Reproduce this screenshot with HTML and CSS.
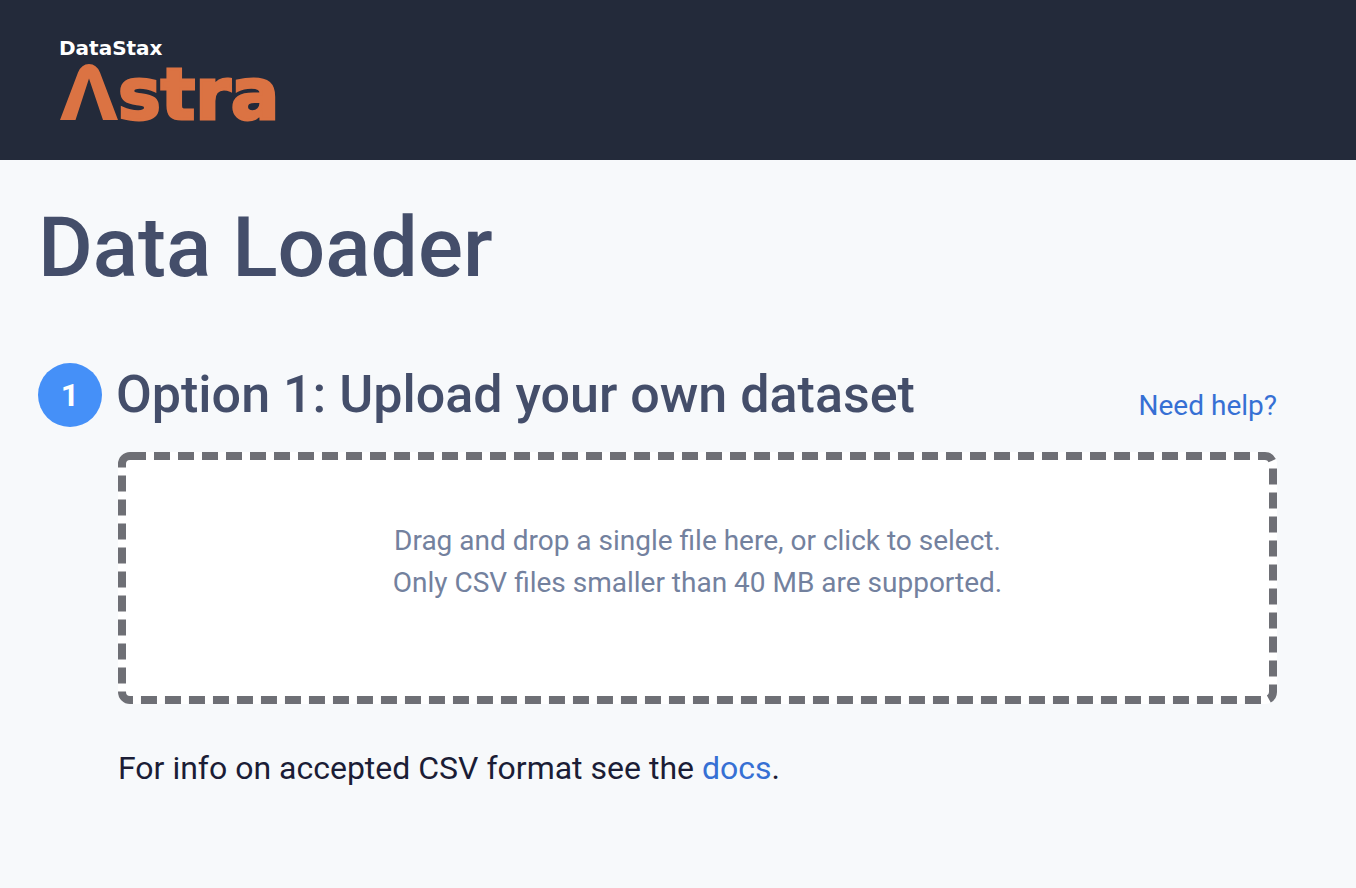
FILE: index.html
```html
<!DOCTYPE html>
<html lang="en">
<head>
<meta charset="utf-8">
<meta name="viewport" content="width=device-width, initial-scale=1">
<title>Data Loader</title>
<link rel="stylesheet" href="styles.css">
</head>
<body>
<header class="topbar">
  <svg class="logo" width="220" height="82" viewBox="0 0 220 82" role="img" aria-label="DataStax Astra">
    <text class="logo-brand" x="-1" y="16">DataStax</text>
    <path class="logo-peak" d="M0 81 L18 33.500 Q21.500 25 29 25 Q36.500 25 40 33.500 L58 81 L43 81 L29 39.500 L15.500 81 Z"/>
    <text class="logo-product" x="58" y="80">stra</text>
  </svg>
</header>
<main class="page">
  <h1 class="page-title">Data Loader</h1>
  <section class="step">
    <div class="step-header">
      <span class="step-number">1</span>
      <h2 class="step-title">Option 1: Upload your own dataset</h2>
      <a class="link help" href="#help">Need help?</a>
    </div>
    <div class="step-body">
      <button class="dropzone" type="button">
        <svg class="dropzone-outline" aria-hidden="true"><rect x="4" y="4" rx="8"/></svg>
        <span>Drag and drop a single file here, or click to select.</span>
        <span>Only CSV files smaller than 40 MB are supported.</span>
      </button>
      <p class="note">For info on accepted CSV format see the <a class="link" href="#docs">docs</a>.</p>
    </div>
  </section>
</main>
</body>
</html>
```
FILE: styles.css
```css
* {
  box-sizing: border-box;
}

body {
  margin: 0;
  background: #f7f9fb;
  color: #1b1d36;
  font-family: Roboto, "Liberation Sans", sans-serif;
}

.topbar {
  display: flex;
  padding: 39px 60px;
  background: #232a3a;
}

.logo {
  display: block;
  overflow: visible;
}

.logo-brand,
.logo-product {
  font-family: "DejaVu Sans", sans-serif;
  font-weight: 700;
}

.logo-brand {
  fill: #fff;
  font-size: 20px;
}

.logo-product {
  fill: #db7343;
  stroke: #db7343;
  stroke-width: 3px;
  font-size: 72px;
}

.logo-peak {
  fill: #db7343;
}

.page {
  padding: 36px 79px 48px 38px;
}

.page-title {
  margin: 0;
  color: #444e6a;
  font-size: 84px;
  font-weight: 500;
  line-height: 104px;
}

.step {
  margin-top: 63px;
}

.step-header {
  display: flex;
  align-items: center;
  gap: 14px;
}

.step-number {
  display: flex;
  flex: none;
  align-items: center;
  justify-content: center;
  width: 64px;
  height: 64px;
  border-radius: 50%;
  background: #4590f8;
  color: #fff;
  font-size: 32px;
  font-weight: 700;
}

.step-title {
  margin: 0;
  color: #444e6a;
  font-size: 52px;
  font-weight: 500;
  line-height: 64px;
}

.link {
  color: #3670d4;
  text-decoration: none;
}

.help {
  align-self: flex-end;
  margin-left: auto;
  font-size: 28px;
  line-height: 42px;
}

.step-body {
  margin-top: 25px;
  padding-left: 80px;
}

.dropzone {
  position: relative;
  display: flex;
  flex-direction: column;
  align-items: center;
  width: 100%;
  padding: 68px 40px 100px;
  border: 0;
  border-radius: 12px;
  background: #fff;
  color: #73819e;
  font-family: inherit;
  font-size: 28px;
  line-height: 42px;
  cursor: pointer;
}

.dropzone-outline {
  position: absolute;
  inset: 0;
  width: 100%;
  height: 100%;
}

.dropzone-outline rect {
  width: calc(100% - 8px);
  height: calc(100% - 8px);
  fill: none;
  stroke: #6e6f75;
  stroke-width: 8px;
  stroke-dasharray: 16 8;
}

.note {
  margin: 40px 0 0;
  font-size: 32px;
  line-height: 48px;
}
```
